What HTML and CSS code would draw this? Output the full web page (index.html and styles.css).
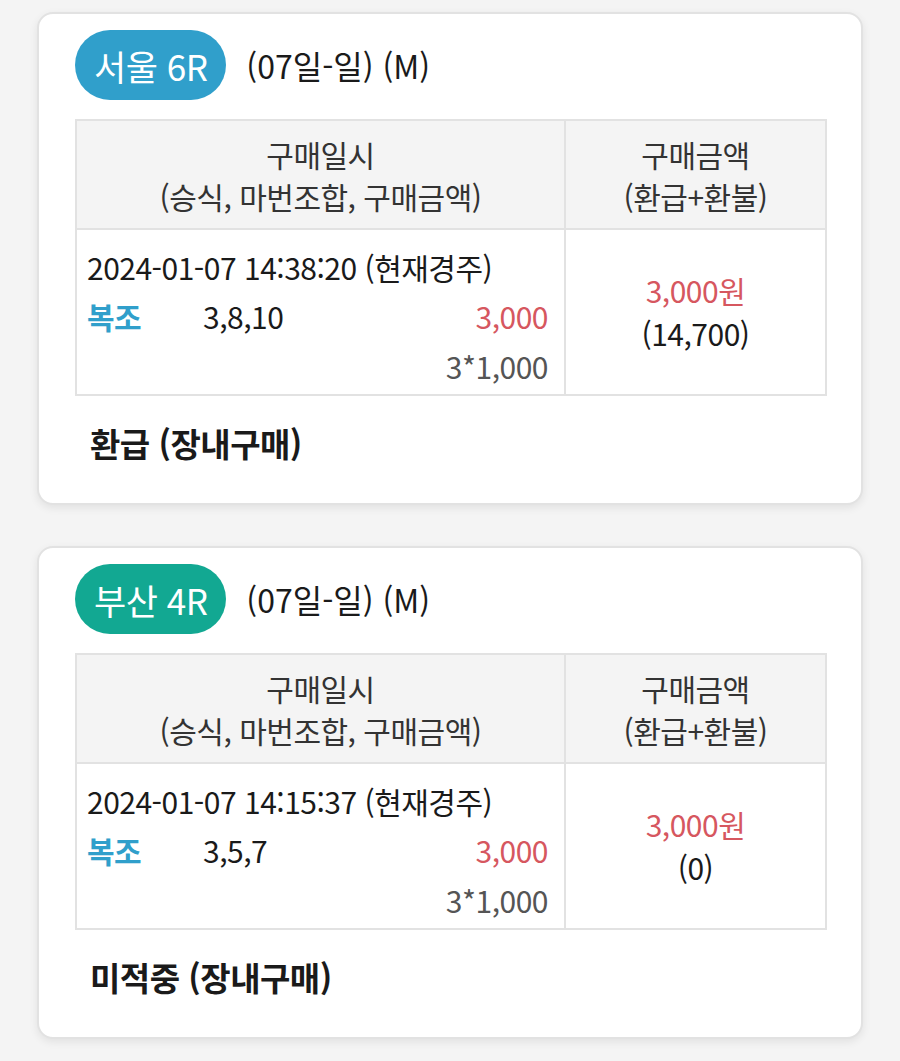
FILE: index.html
```html
<!DOCTYPE html>
<html lang="ko">
<head>
  <meta charset="utf-8">
  <meta name="viewport" content="width=device-width, initial-scale=1.0">
  <title>구매내역</title>
  <link rel="stylesheet" href="styles.css">
</head>
<body>
<div class="list">
  <div class="card">
    <div class="card-head">
      <span class="badge seoul">서울 6R</span>
      <span class="race-info">(07일-일) (M)</span>
    </div>
    <table class="buy-table">
      <thead>
        <tr>
          <th class="col-left">구매일시<br>(승식, 마번조합, 구매금액)</th>
          <th class="col-right">구매금액<br>(환급+환불)</th>
        </tr>
      </thead>
      <tbody>
        <tr>
          <td>
            <div class="buy-date">2024-01-07 14:38:20 (현재경주)</div>
            <div class="buy-row">
              <span class="bet-type">복조</span>
              <span class="bet-nums">3,8,10</span>
              <span class="bet-amt">3,000</span>
            </div>
            <div class="bet-calc">3*1,000</div>
          </td>
          <td class="col-right">
            <div class="total">3,000원</div>
            <div>(14,700)</div>
          </td>
        </tr>
      </tbody>
    </table>
    <div class="result">환급 (장내구매)</div>
  </div>

  <div class="card">
    <div class="card-head">
      <span class="badge busan">부산 4R</span>
      <span class="race-info">(07일-일) (M)</span>
    </div>
    <table class="buy-table">
      <thead>
        <tr>
          <th class="col-left">구매일시<br>(승식, 마번조합, 구매금액)</th>
          <th class="col-right">구매금액<br>(환급+환불)</th>
        </tr>
      </thead>
      <tbody>
        <tr>
          <td>
            <div class="buy-date">2024-01-07 14:15:37 (현재경주)</div>
            <div class="buy-row">
              <span class="bet-type">복조</span>
              <span class="bet-nums">3,5,7</span>
              <span class="bet-amt">3,000</span>
            </div>
            <div class="bet-calc">3*1,000</div>
          </td>
          <td class="col-right">
            <div class="total">3,000원</div>
            <div>(0)</div>
          </td>
        </tr>
      </tbody>
    </table>
    <div class="result">미적중 (장내구매)</div>
  </div>
</div>
</body>
</html>
```

FILE: styles.css
```css
body {
  margin: 0;
  background-color: #f4f4f4;
  font-family: "Noto Sans CJK KR", "Noto Sans", sans-serif;
  color: #1a1a1a;
}
.list {
  display: flex;
  flex-direction: column;
  gap: 41px;
  padding: 12px 37px 20px 37px;
}
.card {
  background-color: #fff;
  border: 2px solid #e2e2e2;
  border-radius: 16px;
  box-shadow: 0 3px 8px rgba(0, 0, 0, 0.08);
  padding: 16px 34px 0 36px;
  box-sizing: border-box;
  height: 493px;
}
.card-head {
  display: flex;
  align-items: center;
  gap: 20px;
  height: 70px;
}
.badge {
  display: inline-flex;
  align-items: center;
  justify-content: center;
  height: 70px;
  padding: 0 19px;
  border-radius: 35px;
  color: #fff;
  font-size: 35px;
  letter-spacing: -0.5px;
  box-sizing: border-box;
}
.badge.seoul {
  background-color: #309fcb;
}
.badge.busan {
  background-color: #12a892;
}
.race-info {
  font-size: 32px;
}
.buy-table {
  width: 100%;
  margin-top: 19px;
  border-collapse: collapse;
  font-size: 30px;
  letter-spacing: -0.5px;
}
.buy-table th,
.buy-table td {
  border: 2px solid #e2e2e2;
}
.buy-table th {
  background-color: #f4f4f4;
  font-weight: 400;
  color: #333;
  line-height: 42px;
  height: 107px;
  padding: 0;
}
.buy-table th.col-left {
  width: 487px;
}
.buy-table td {
  vertical-align: top;
  padding: 13px 16px 3px 10px;
  line-height: 50px;
}
.buy-table td.col-right {
  text-align: center;
  vertical-align: middle;
  padding: 0;
  line-height: 43px;
}
.buy-date {
  line-height: 48px;
}
.buy-row {
  display: flex;
}
.bet-type {
  color: #309fcb;
  font-weight: 700;
  width: 116px;
}
.bet-nums {
  flex: 1;
}
.bet-amt {
  color: #d6575f;
}
.bet-calc {
  text-align: right;
  color: #555;
}
.total {
  color: #d6575f;
}
.result {
  font-size: 33px;
  font-weight: 700;
  letter-spacing: -0.5px;
  line-height: 46px;
  padding: 24px 0 0 15px;
}
```
